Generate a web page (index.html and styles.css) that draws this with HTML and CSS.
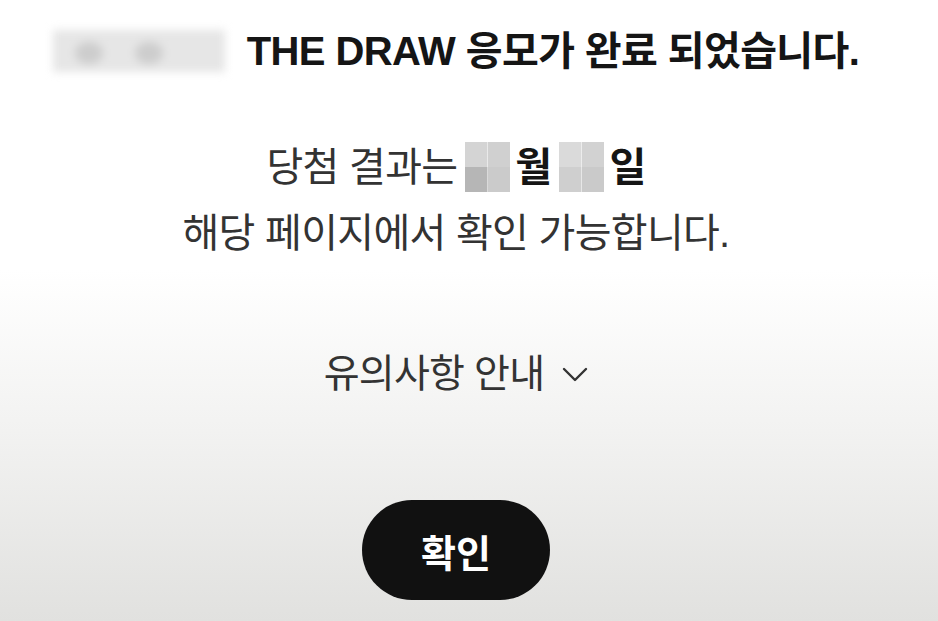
FILE: index.html
```html
<!DOCTYPE html>
<html lang="ko">
<head>
<meta charset="utf-8">
<link rel="stylesheet" href="styles.css">
</head>
<body>
<main class="page">
  <h1 class="title">
    <span class="blurred" aria-hidden="true"><span class="blob b1"></span><span class="blob b2"></span></span>
    <span class="title-text">THE DRAW 응모가 완료 되었습니다.</span>
  </h1>
  <div class="info">
    <p class="line">당첨 결과는 <span class="mosaic m1"></span><b>월</b> <span class="mosaic m2"></span><b>일</b></p>
    <p class="line">해당 페이지에서 확인 가능합니다.</p>
  </div>
  <button class="notice" type="button">유의사항 안내
    <svg class="chev" viewBox="0 0 26 16" width="26" height="16"><path d="M2 3 L13 14 L24 3" fill="none" stroke="#333" stroke-width="2.4" stroke-linecap="round" stroke-linejoin="round"/></svg>
  </button>
  <button class="confirm" type="button">확인</button>
</main>
</body>
</html>
```
FILE: styles.css
```css
html, body {
  margin: 0;
  padding: 0;
}
body {
  width: 938px;
  height: 621px;
  overflow: hidden;
  background: linear-gradient(to bottom, #ffffff 0px, #ffffff 270px, #f3f3f2 420px, #e1e1df 621px);
  font-family: "Liberation Sans", "Noto Sans CJK KR", sans-serif;
  color: #222;
}
.page {
  display: flex;
  flex-direction: column;
  align-items: center;
  height: 621px;
  padding-right: 26px;
}
.title {
  margin: 26px 0 0 0;
  display: flex;
  align-items: center;
  gap: 22px;
  font-size: 40px;
  font-weight: bold;
  color: #151515;
  letter-spacing: -0.6px;
  line-height: 50px;
}
.blurred {
  position: relative;
  width: 172px;
  height: 42px;
  background: #e6e6e6;
  filter: blur(4px);
  display: block;
}
.blob {
  position: absolute;
  top: 12px;
  width: 28px;
  height: 22px;
  border-radius: 50%;
  background: #cdcdcd;
}
.b1 { left: 22px; }
.b2 { left: 82px; }
.info {
  margin-top: 58px;
  display: flex;
  flex-direction: column;
  align-items: center;
}
.line {
  margin: 0;
  font-size: 40px;
  line-height: 66px;
  color: #333;
  letter-spacing: -0.7px;
  display: flex;
  align-items: center;
}
.line b {
  color: #151515;
  font-weight: bold;
  margin-left: 5px;
}
.mosaic {
  display: inline-block;
  width: 45px;
  height: 50px;
  margin-left: 8px;
}
.m1 {
  background:
    linear-gradient(#d4d4d4, #d4d4d4) 0 0 / 50% 50% no-repeat,
    linear-gradient(#d0d0d0, #d0d0d0) 100% 0 / 50% 50% no-repeat,
    linear-gradient(#b6b6b6, #b6b6b6) 0 100% / 50% 50% no-repeat,
    linear-gradient(#cbcbcb, #cbcbcb) 100% 100% / 50% 50% no-repeat;
}
.m2 {
  margin-left: 8px;
  background:
    linear-gradient(#dadada, #dadada) 0 0 / 50% 50% no-repeat,
    linear-gradient(#d2d2d2, #d2d2d2) 100% 0 / 50% 50% no-repeat,
    linear-gradient(#cfcfcf, #cfcfcf) 0 100% / 50% 50% no-repeat,
    linear-gradient(#cacaca, #cacaca) 100% 100% / 50% 50% no-repeat;
}
.notice {
  margin-top: 84px;
  display: flex;
  align-items: center;
  gap: 18px;
  background: none;
  border: 0;
  padding: 0;
  font-family: inherit;
  font-size: 39px;
  color: #333;
  letter-spacing: -0.8px;
  line-height: 48px;
}
.chev {
  display: block;
}
.confirm {
  margin-top: 102px;
  width: 188px;
  height: 100px;
  border: 0;
  border-radius: 50px;
  background: #111;
  color: #fff;
  font-family: inherit;
  font-size: 38px;
  font-weight: bold;
  padding: 0;
}
```
